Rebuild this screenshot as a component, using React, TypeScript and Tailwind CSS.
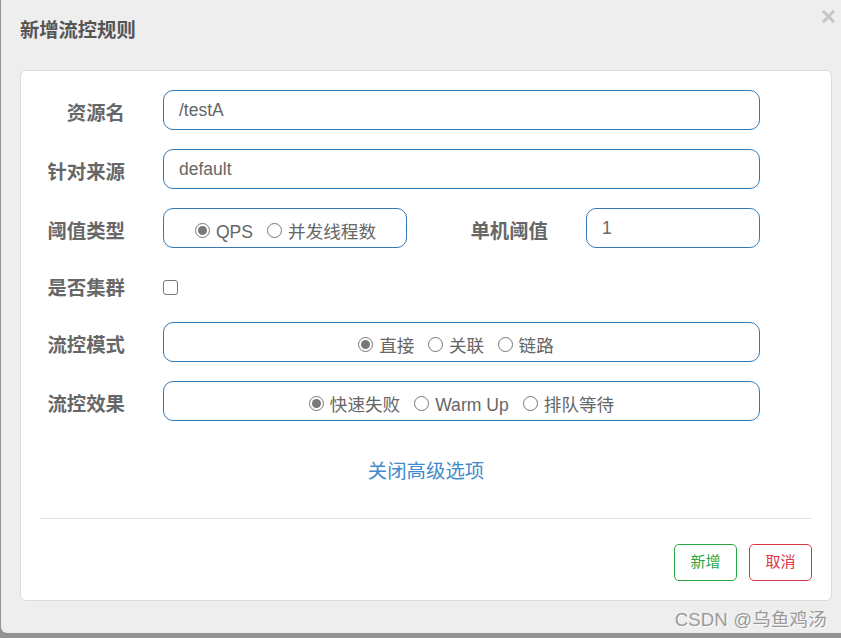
const sans = "font-['Liberation_Sans','Noto_Sans_CJK_SC',sans-serif]";

function Radio({ checked, label }: { checked?: boolean; label: string }) {
  return (
    <span className="inline-flex items-center">
      <span className="mr-[6px] flex h-[15px] w-[15px] items-center justify-center rounded-full border border-[#767676] bg-white">
        {checked && <span className="h-[9px] w-[9px] rounded-full bg-[#787878]" />}
      </span>
      <span className="mt-[4px] text-[17.6px] leading-5 text-[#666]">{label}</span>
    </span>
  );
}

function Label({ children, className = "w-[104px]" }: { children: string; className?: string }) {
  return <div className={`${className} h-10 shrink-0 text-right text-[19.4px] font-bold leading-[46px] text-[#676767]`}>{children}</div>;
}

const box = "h-10 rounded-[10px] border border-[#337ab7] bg-white";

function TextBox({ value, className = "w-[597px]" }: { value: string; className?: string }) {
  return <div className={`${box} ${className} pl-[15px] text-[17.5px] leading-[38px] text-[#666]`}>{value}</div>;
}

export default function App() {
  return (
    <div className={`${sans} relative h-[638px] w-[841px] overflow-hidden bg-[#939393]`}>
      <div className="ml-px flex h-[633px] flex-col rounded-bl-[6px] bg-[#eeeeee]">
        <div className="flex h-[70px] shrink-0 items-start justify-between">
          <div className="ml-[19px] mt-[19px] text-[19.3px] font-bold leading-6 text-[#555]">新增流控规则</div>
          <svg className="mr-[5px] mt-[9px]" width="15" height="15" viewBox="0 0 15 15">
            <path d="M1.8 1.8 L13.2 13.2 M13.2 1.8 L1.8 13.2" stroke="#c6c6c6" strokeWidth="3" />
          </svg>
        </div>
        <div className="ml-[19px] flex h-[531px] w-[812px] flex-col rounded-[6px] border border-[#dcdcdc] bg-white pt-[19px]">
          <div className="flex flex-col gap-[19px]">
            <div className="flex items-center gap-[38px]">
              <Label>资源名</Label>
              <TextBox value="/testA" />
            </div>
            <div className="flex items-center gap-[38px]">
              <Label>针对来源</Label>
              <TextBox value="default" />
            </div>
            <div className="flex items-center gap-[38px]">
              <Label>阈值类型</Label>
              <div className={`${box} flex w-[244px] items-center justify-center gap-[14px] pl-px pt-[4px]`}>
                <Radio checked label="QPS" />
                <Radio label="并发线程数" />
              </div>
              <Label className="w-[103px]">单机阈值</Label>
              <TextBox value="1" className="w-[174px]" />
            </div>
          </div>
          <div className="mt-[14px] flex h-[40px] items-start gap-[38px]">
            <Label className="w-[104px] mt-[3px]">是否集群</Label>
            <span className="mt-[18px] h-[15px] w-[15px] rounded-[3px] border border-[#767676] bg-white" />
          </div>
          <div className="mt-[20px] flex flex-col gap-[19px]">
            <div className="flex items-center gap-[38px]">
              <Label>流控模式</Label>
              <div className={`${box} flex w-[597px] items-center justify-center gap-[13.5px] pr-[11px] pt-[4px]`}>
                <Radio checked label="直接" />
                <Radio label="关联" />
                <Radio label="链路" />
              </div>
            </div>
            <div className="flex items-center gap-[38px]">
              <Label>流控效果</Label>
              <div className={`${box} flex w-[597px] items-center justify-center gap-[14px] pt-[4px]`}>
                <Radio checked label="快速失败" />
                <Radio label="Warm Up" />
                <Radio label="排队等待" />
              </div>
            </div>
          </div>
          <div className="mt-[38px] flex justify-center">
            <a className="text-[19.4px] leading-6 text-[#428bca]">关闭高级选项</a>
          </div>
          <div className="mx-[19px] mt-[35px] h-px bg-[#e5e5e5]" />
          <div className="mt-[25px] flex justify-end gap-[12px] pr-[19px]">
            <button className="h-[37px] w-[63px] rounded-[5px] border border-[#28a745] bg-white text-[15px] text-[#28a745]">新增</button>
            <button className="h-[37px] w-[63px] rounded-[5px] border border-[#dc3545] bg-white text-[15px] text-[#dc3545]">取消</button>
          </div>
        </div>
      </div>
      <div className="absolute bottom-[6px] right-[14px] text-[18.5px] leading-6 tracking-[0.2px] text-[#9a9a9a] [text-shadow:1px_1px_1px_rgba(255,255,255,0.8)]">CSDN @乌鱼鸡汤</div>
    </div>
  );
}
